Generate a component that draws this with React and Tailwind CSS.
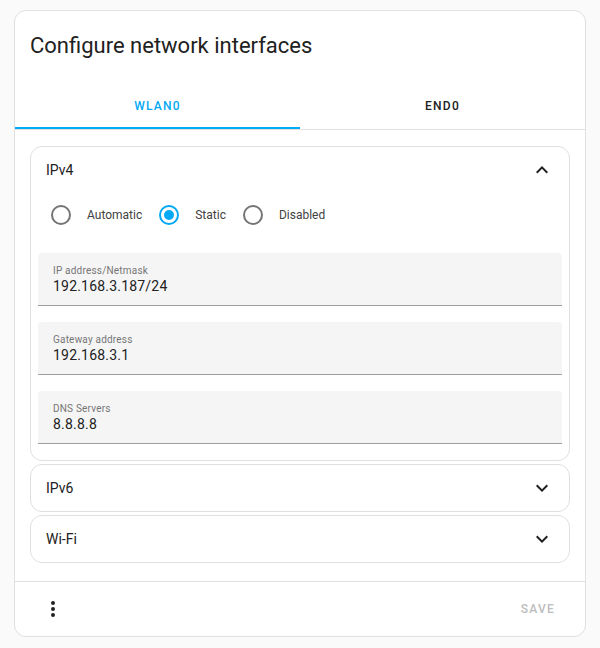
import React, { useState } from 'react';

const font = { fontFamily: 'Roboto, "Noto Sans", sans-serif' };

const Chevron = ({ up }) => (
  <svg width="24" height="24" viewBox="0 0 24 24" className="text-[#212121]">
    <path
      fill="currentColor"
      d={up ? 'M7.41,15.41L12,10.83L16.59,15.41L18,14L12,8L6,14L7.41,15.41Z' : 'M7.41,8.58L12,13.17L16.59,8.58L18,10L12,16L6,10L7.41,8.58Z'}
    />
  </svg>
);

const Radio = ({ checked, label, onClick }) => (
  <label className="flex items-center cursor-pointer" onClick={onClick}>
    <span className="w-[40px] h-[40px] flex items-center justify-center">
      <span
        className={`w-[20px] h-[20px] rounded-full border-2 flex items-center justify-center ${checked ? 'border-[#03a9f4]' : 'border-[#757575]'}`}
      >
        {checked && <span className="w-[10px] h-[10px] rounded-full bg-[#03a9f4]" />}
      </span>
    </span>
    <span className="text-[12px] text-[#424242] pl-[6px] pr-[7px]">{label}</span>
  </label>
);

const Field = ({ label, value }) => (
  <div className="bg-[#f5f5f5] rounded-t-[4px] border-b border-[#9e9e9e] h-[53px] px-[15px] pt-[12px]">
    <div className="text-[10px] leading-[12px] tracking-[0.2px] text-[#757575]">{label}</div>
    <div className="text-[14px] leading-[18px] tracking-[0.2px] text-[#212121]">{value}</div>
  </div>
);

const Panel = ({ title, open, onToggle, children }) => (
  <div className="border border-[#e0e0e0] rounded-[12px] bg-white">
    <button
      onClick={onToggle}
      className="w-full h-[46px] flex items-center justify-between pl-[15px] pr-[15px]"
    >
      <span className="text-[14px] text-[#212121]">{title}</span>
      <Chevron up={open} />
    </button>
    {open && children}
  </div>
);

const App = () => {
  const [tab, setTab] = useState(0);
  const [mode, setMode] = useState('static');
  const [open, setOpen] = useState({ ipv4: true, ipv6: false, wifi: false });
  const toggle = (k) => setOpen({ ...open, [k]: !open[k] });

  return (
    <div className="min-h-screen bg-[#fafafa] pt-[10px] px-[14px]" style={font}>
      <div className="bg-white border border-[#e0e0e0] rounded-[12px] overflow-hidden">
        <h2 className="text-[22px] leading-[28px] text-[#212121] px-[15px] pt-[21px] pb-[23px]">
          Configure network interfaces
        </h2>

        <div className="flex border-b border-[#e0e0e0]">
          {['WLAN0', 'END0'].map((t, i) => (
            <button
              key={t}
              onClick={() => setTab(i)}
              className={`flex-1 h-[46px] text-[12px] font-medium tracking-[1.25px] relative ${tab === i ? 'text-[#03a9f4]' : 'text-[#212121]'}`}
            >
              {t}
              {tab === i && <span className="absolute left-0 right-0 bottom-0 h-[2px] bg-[#03a9f4]" />}
            </button>
          ))}
        </div>

        <div className="px-[15px] pt-[16px] pb-[18px] flex flex-col gap-[3px]">
          <Panel title="IPv4" open={open.ipv4} onToggle={() => toggle('ipv4')}>
            <div className="flex items-center pl-[10px] pt-[2px] pb-[18px]">
              <Radio label="Automatic" checked={mode === 'auto'} onClick={() => setMode('auto')} />
              <Radio label="Static" checked={mode === 'static'} onClick={() => setMode('static')} />
              <Radio label="Disabled" checked={mode === 'disabled'} onClick={() => setMode('disabled')} />
            </div>
            {mode === 'static' && (
              <div className="px-[7px] pb-[16px] flex flex-col gap-[16px]">
                <Field label="IP address/Netmask" value="192.168.3.187/24" />
                <Field label="Gateway address" value="192.168.3.1" />
                <Field label="DNS Servers" value="8.8.8.8" />
              </div>
            )}
          </Panel>
          <Panel title="IPv6" open={open.ipv6} onToggle={() => toggle('ipv6')} />
          <Panel title="Wi-Fi" open={open.wifi} onToggle={() => toggle('wifi')} />
        </div>

        <div className="border-t border-[#e0e0e0] h-[55px] flex items-center justify-between pl-[26px] pr-[30px]">
          <svg width="24" height="24" viewBox="0 0 24 24" className="text-[#212121]">
            <path
              fill="currentColor"
              d="M12,16A2,2 0 0,1 14,18A2,2 0 0,1 12,20A2,2 0 0,1 10,18A2,2 0 0,1 12,16M12,10A2,2 0 0,1 14,12A2,2 0 0,1 12,14A2,2 0 0,1 10,12A2,2 0 0,1 12,10M12,4A2,2 0 0,1 14,6A2,2 0 0,1 12,8A2,2 0 0,1 10,6A2,2 0 0,1 12,4Z"
            />
          </svg>
          <button disabled className="text-[12px] font-medium tracking-[1.25px] text-[#bdbdbd]">
            SAVE
          </button>
        </div>
      </div>
    </div>
  );
};

export default App;
